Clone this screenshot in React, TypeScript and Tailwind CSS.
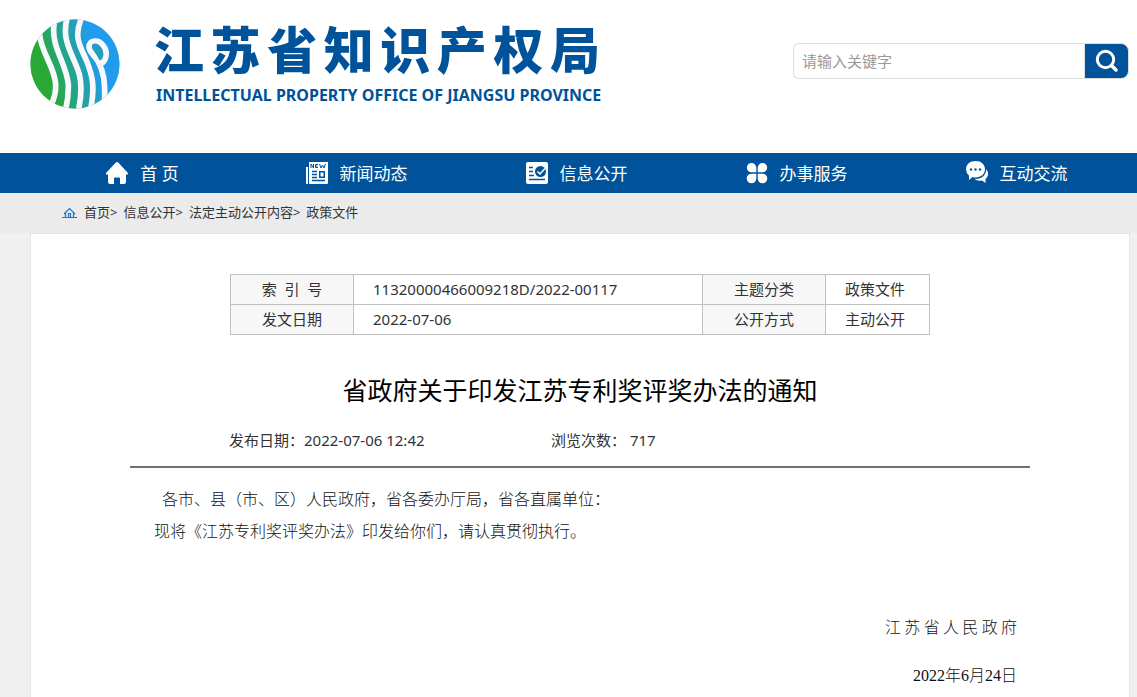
import type { ReactNode } from 'react';

interface NavItem {
  label: string;
  icon: ReactNode;
  className?: string;
}

const navItems: NavItem[] = [
  { label: '首 页', icon: <HomeIcon />, className: 'pl-3' },
  { label: '新闻动态', icon: <NewsIcon /> },
  { label: '信息公开', icon: <InfoIcon /> },
  { label: '办事服务', icon: <ServiceIcon /> },
  { label: '互动交流', icon: <ChatIcon /> },
];

const crumbs = ['首页', '信息公开', '法定主动公开内容', '政策文件'];

function Logo() {
  return (
    <svg viewBox="6 9 270 270" className="size-[90px] shrink-0" aria-hidden="true">
      <defs>
        <clipPath id="disc">
          <circle cx="141" cy="144" r="134" />
        </clipPath>
        <linearGradient id="sea" gradientUnits="userSpaceOnUse" x1="55" y1="170" x2="205" y2="125">
          <stop offset="0" stopColor="#2aa835" />
          <stop offset="0.35" stopColor="#24a67c" />
          <stop offset="0.7" stopColor="#22a0b4" />
          <stop offset="1" stopColor="#219cec" />
        </linearGradient>
      </defs>
      <g clipPath="url(#disc)">
        <rect x="6" y="9" width="270" height="270" fill="url(#sea)" />
        <g fill="none" stroke="#f8f8fc" strokeWidth="17">
          <path d="M34 50C38 110 80 150 83 205C84 230 80 245 70 265" />
          <path d="M79 20C66 90 115 140 121 205C122 235 119 255 112 285" />
          <path d="M119 0C96 75 137 115 154 175C164 215 159 250 150 290" />
          <path d="M163 0C134 65 157 90 176 135C196 185 200 215 188 280" />
          <path d="M230 250C231 195 227 168 211 138C200 118 183 108 183 93C183 70 212 70 225 88C242 110 235 135 216 145" />
        </g>
        <path d="M193 86C203 76 218 88 223 103C227 117 222 129 214 133C207 114 194 102 193 86Z" fill="#22a0b8" />
      </g>
    </svg>
  );
}

function HomeIcon() {
  return (
    <svg viewBox="0 0 24 24" className="size-6" fill="#fff" aria-hidden="true">
      <path d="M12 1Q12.600 1 13.200 1.600L22.500 11.500Q24 13.500 21.500 13.500H21V21Q21 23 19 23H15V17.500Q15 16.500 14 16.500H10Q9 16.500 9 17.500V23H5Q3 23 3 21V13.500H2Q0 13.500 1.500 11.500L10.800 1.600Q11.400 1 12 1Z" />
    </svg>
  );
}

function NewsIcon() {
  return (
    <svg viewBox="0 0 24 24" className="size-6" aria-hidden="true">
      <path d="M4 1H23V22Q23 23 22 23H5Q4 23 4 22ZM1 6H3V23H2Q1 23 1 22Z" fill="#fff" />
      <g fill="none" stroke="#00539a">
        <path d="M6 7V3L8.500 7V3M13 3.500H10.500V6.500H13M10.500 5H12.500M14.500 3L16 7L17.500 4L19 7L20.500 3" />
        <path d="M7 10.500H12M7 13.500H12M7 16.500H12M7 19.500H20" strokeWidth="1.500" />
        <path d="M14.750 10.750H19.250V16.250H14.750Z" strokeWidth="1.500" />
      </g>
    </svg>
  );
}

function InfoIcon() {
  return (
    <svg viewBox="0 0 24 24" className="size-6" aria-hidden="true">
      <rect x="1" y="1" width="22" height="22" rx="2" fill="#fff" />
      <path d="M4 6.500H8M4 10.500H8M4 14.500H9M4 18.500H20" stroke="#00539a" strokeWidth="1.500" />
      <circle cx="15.500" cy="10.500" r="5.500" fill="#00539a" />
      <path d="M12.500 10.500L15 13L20 7.500" fill="none" stroke="#fff" strokeWidth="1.500" />
    </svg>
  );
}

function ServiceIcon() {
  return (
    <svg viewBox="0 0 24 24" className="size-6" fill="#fff" aria-hidden="true">
      <path d="M6.500 2A4.800 4.800 0 0 1 11.300 6.800V11.300H6.500A4.650 4.650 0 0 1 6.500 2ZM17.500 2A4.650 4.650 0 0 1 17.500 11.300H12.700V6.800A4.800 4.800 0 0 1 17.500 2ZM6.500 12.700H11.300V17.500A4.800 4.800 0 1 1 6.500 12.700ZM12.700 12.700H17.500A4.800 4.800 0 1 1 12.700 17.500Z" />
    </svg>
  );
}

function ChatIcon() {
  return (
    <svg viewBox="0 0 24 24" className="size-6" fill="#fff" aria-hidden="true">
      <path d="M10.500 0C16 0 20 3.500 20 8.300S16 16.500 10.500 16.500Q9 16.500 7.500 16L4 19V14.500Q1 12 1 8.300C1 3.500 5 0 10.500 0Z" />
      <path d="M21.300 8Q23.500 10.500 23 14Q22.500 16.500 20.500 18V22L17 19.500Q12.500 20.500 9.500 18Q18 18 20.500 12Q21.500 10 21.300 8Z" />
      <g fill="#00539a">
        <circle cx="6" cy="8.500" r="1.200" />
        <circle cx="10.500" cy="8.500" r="1.200" />
        <circle cx="15" cy="8.500" r="1.200" />
      </g>
    </svg>
  );
}

function CrumbHomeIcon() {
  return (
    <svg viewBox="0 0 15 12" className="mr-[7px] h-3 w-[15px]" fill="none" stroke="#1777cf" aria-hidden="true">
      <path d="M0 10.500H15M2 7L7.500 1.500L13 7M3.500 6V10M11.500 6V10M6.500 10V6.500H8.500V10" strokeWidth="1.200" />
    </svg>
  );
}

function Header() {
  return (
    <header className="flex h-[153px] items-start justify-between bg-white pr-2 pl-[30px]">
      <div className="flex pt-[19px] text-[#00539a]">
        <Logo />
        <div className="ml-[34px] w-[446px]">
          <h1 className="text-[50px] leading-[62px] font-black [text-align-last:justify]">江苏省知识产权局</h1>
          <p className="pl-0.5 text-base leading-7 font-bold whitespace-nowrap">
            INTELLECTUAL PROPERTY OFFICE OF JIANGSU PROVINCE
          </p>
        </div>
      </div>
      <form className="mt-[43px] flex h-9 w-[336px]" onSubmit={(e) => e.preventDefault()}>
        <input
          type="text"
          aria-label="请输入关键字"
          placeholder="请输入关键字"
          className="min-w-0 grow rounded-l-md border border-r-0 border-[#ddd] px-2 text-[15px] text-[#333] outline-none placeholder:text-[#999]"
        />
        <button
          type="submit"
          aria-label="搜索"
          className="flex w-[45px] items-center justify-center rounded-r-lg border border-[#ddd] bg-[#00539a]"
        >
          <svg viewBox="0 0 24 24" className="size-6" fill="none" stroke="#fff" aria-hidden="true">
            <circle cx="10.500" cy="10.500" r="8.200" strokeWidth="3" />
            <path d="M16.500 16.500L21 21" strokeWidth="3.500" strokeLinecap="round" />
          </svg>
        </button>
      </form>
    </header>
  );
}

function MetaTable() {
  const th = 'border border-[#c0c0c0] bg-[#f7f7f7] text-center font-normal';
  const td = 'border border-[#c0c0c0] px-[19px]';

  return (
    <table className="mx-auto w-[700px] table-fixed border-collapse text-[15px] leading-[29px]">
      <colgroup>
        <col className="w-[123px]" />
        <col />
        <col className="w-[123px]" />
        <col className="w-[104px]" />
      </colgroup>
      <tbody>
        <tr>
          <th scope="row" className={th}>
            <span className="whitespace-pre">索  引  号</span>
          </th>
          <td className={td}>11320000466009218D/2022-00117</td>
          <th scope="row" className={th}>主题分类</th>
          <td className={`${td} whitespace-nowrap`}>政策文件</td>
        </tr>
        <tr>
          <th scope="row" className={th}>发文日期</th>
          <td className={td}>2022-07-06</td>
          <th scope="row" className={th}>公开方式</th>
          <td className={`${td} whitespace-nowrap`}>主动公开</td>
        </tr>
      </tbody>
    </table>
  );
}

export default function App() {
  return (
    <div className="min-h-screen bg-[#f0f0f0] font-['Noto_Sans','Noto_Sans_CJK_SC',sans-serif] text-[#333]" lang="zh-CN">
      <Header />

      <nav className="bg-[#00539a] pr-[11px] pl-[26px]">
        <ul className="grid grid-cols-5">
          {navItems.map((item) => (
            <li key={item.label} className={item.className}>
              <a href="#" className="flex h-10 items-center justify-center gap-[11px] text-[17px] text-white">
                {item.icon}
                <span className="pt-0.5">{item.label}</span>
              </a>
            </li>
          ))}
        </ul>
      </nav>

      <div className="flex h-10 items-center bg-[#ebebeb] pl-[62px] text-[13px]">
        <CrumbHomeIcon />
        {crumbs.map((crumb, i) => (
          <span key={crumb} className="mr-1.5">
            <a href="#">{crumb}</a>
            {i < crumbs.length - 1 && '>'}
          </span>
        ))}
      </div>

      <div className="pr-[7px] pl-[30px]">
        <main className="min-h-[464px] border border-[#e5e5e5] bg-white pt-10 pb-2">
          <MetaTable />

          <article className="mx-auto w-[900px]">
            <h2 className="mt-[35px] text-center text-[25px] leading-10 text-black">省政府关于印发江苏专利奖评奖办法的通知</h2>
            <div className="mt-3.5 flex h-11 border-b-2 border-[#717171] pl-[99px] text-[15px] leading-8">
              <p className="w-[322px]">发布日期：2022-07-06 12:42</p>
              <p>浏览次数： 717</p>
            </div>

            <div className="px-6 pt-4 font-['Liberation_Serif','Noto_Sans_CJK_SC',serif] text-base leading-8 font-light text-[#111]">
              <p className="pl-2">各市、县（市、区）人民政府，省各委办厅局，省各直属单位：</p>
              <p>现将《江苏专利奖评奖办法》印发给你们，请认真贯彻执行。</p>
            </div>

            <div className="mt-16 flex flex-col items-end gap-4 pr-[13px] font-['Liberation_Serif','Noto_Sans_CJK_SC',serif] text-base leading-8 font-light text-[#111]">
              <p className="w-[132px] [text-align-last:justify]">江苏省人民政府</p>
              <p>2022年6月24日</p>
            </div>
          </article>
        </main>
      </div>
    </div>
  );
}
